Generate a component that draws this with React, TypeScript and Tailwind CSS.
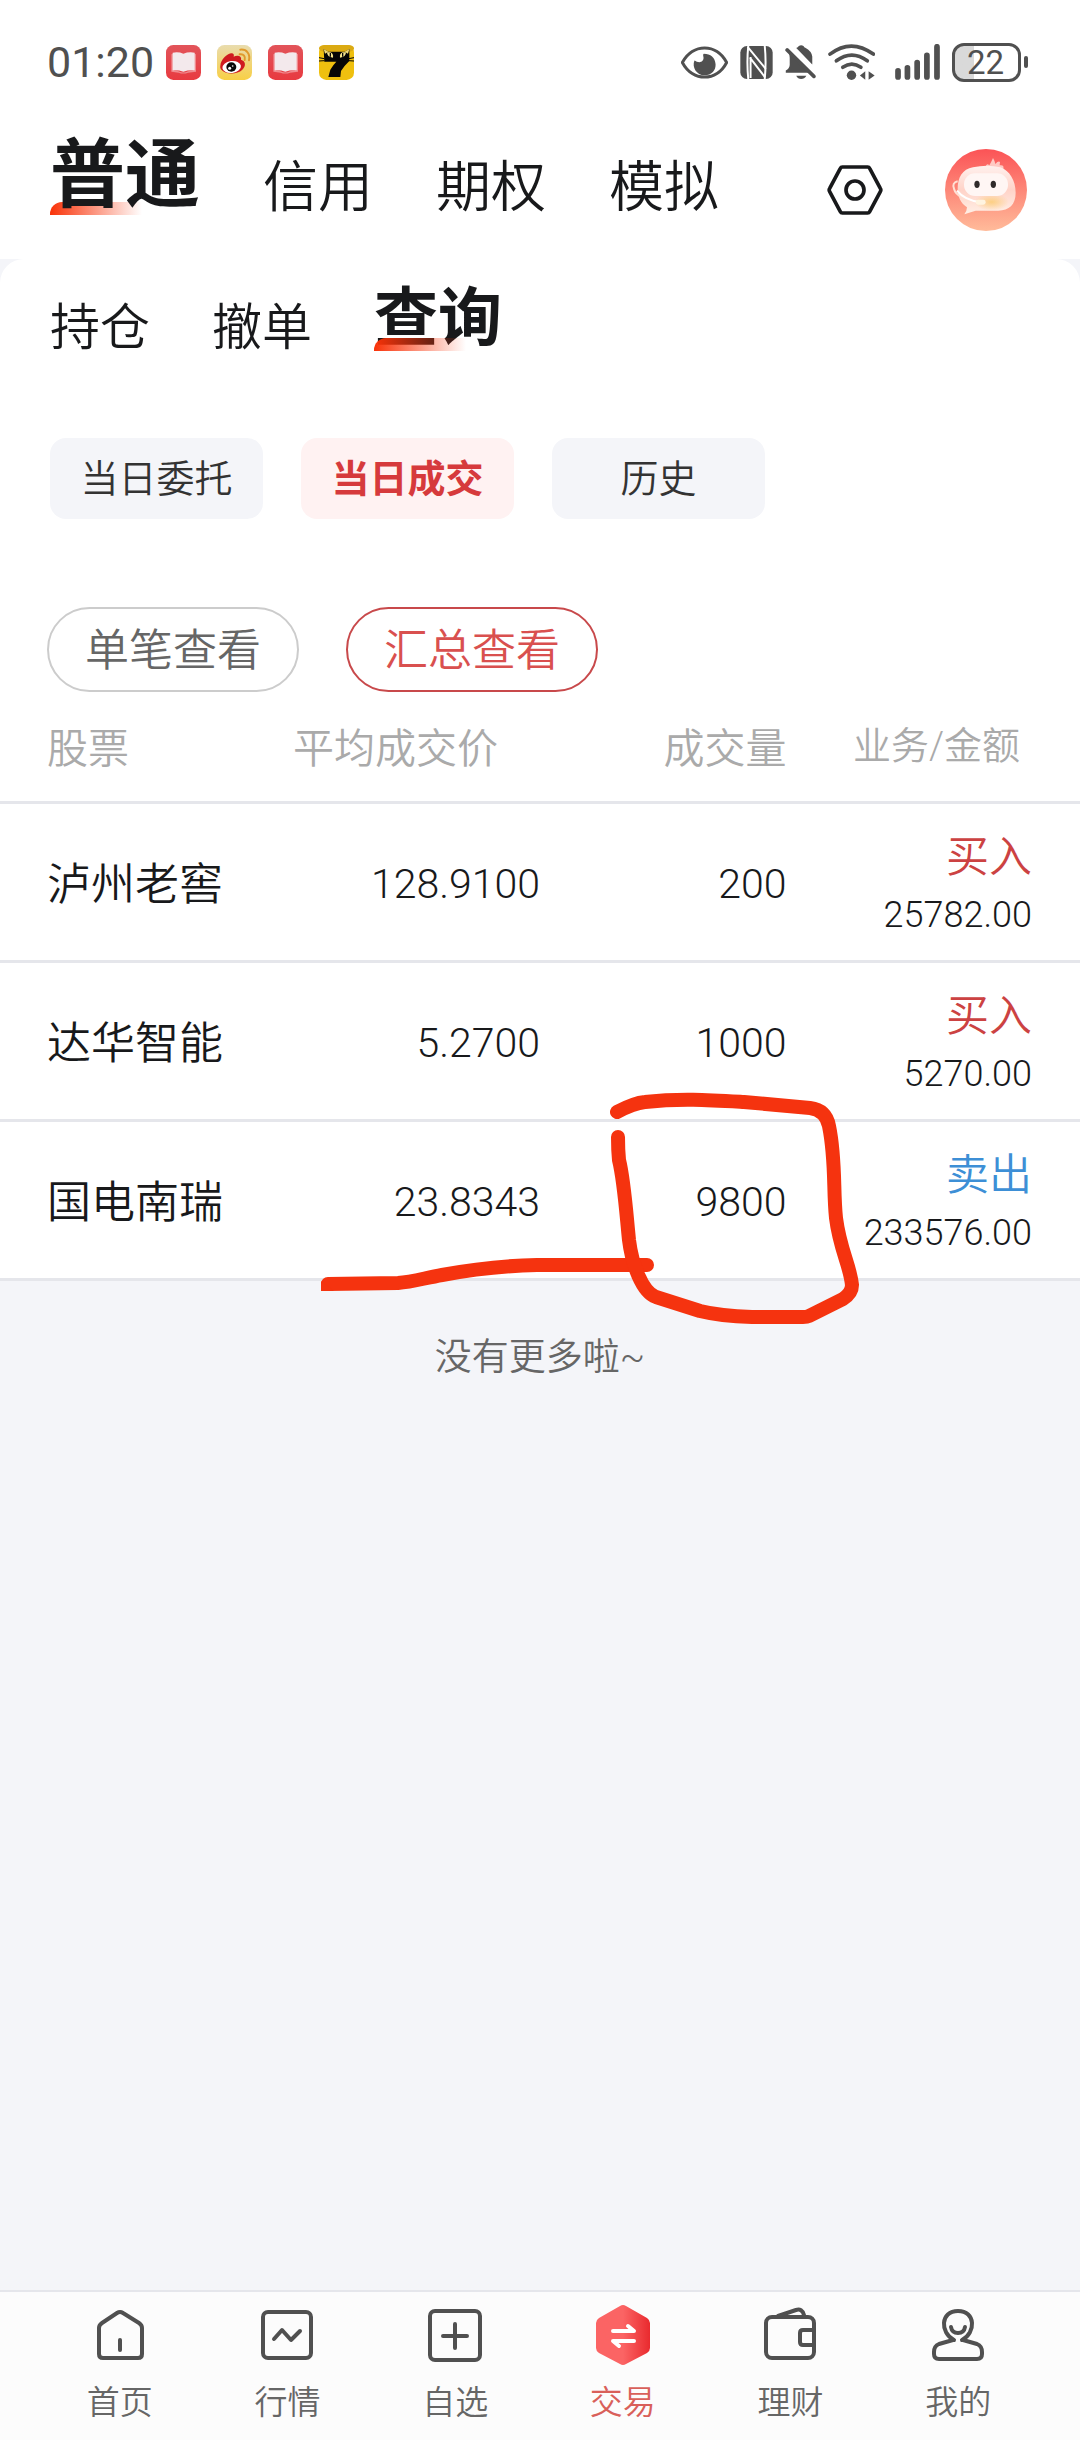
import React, { useState } from 'react';

const trades = [
    { name: '泸州老窖', price: '128.9100', volume: '200', side: '买入', amount: '25782.00' },
    { name: '达华智能', price: '5.2700', volume: '1000', side: '买入', amount: '5270.00' },
    { name: '国电南瑞', price: '23.8343', volume: '9800', side: '卖出', amount: '233576.00' },
];

const BookIcon = () => (
    <svg viewBox="0 0 105 105" className="size-[35px]">
        <defs>
            <linearGradient id="book" x1="0" y1="0" x2="0" y2="1">
                <stop offset="0" stopColor="#e2545a" />
                <stop offset="1" stopColor="#e83a40" />
            </linearGradient>
        </defs>
        <rect width="105" height="105" rx="22" fill="url(#book)" />
        <path d="M16 28L24 25V76L38 79Q52 86 66 79L82 76V25L90 28V80L66 83Q52 88 38 83L16 80Z" fill="#f08a8e" />
        <path d="M20 23Q38 20 52 26Q68 20 86 23V76Q66 75 52 80Q38 75 20 76Z" fill="#f3e9ec" />
    </svg>
);

const WeiboIcon = () => (
    <svg viewBox="0 0 105 105" className="size-[35px]">
        <defs>
            <linearGradient id="weibo" x1="0" y1="0" x2="0" y2="1">
                <stop offset="0" stopColor="#e9dcae" />
                <stop offset="1" stopColor="#f8cf45" />
            </linearGradient>
        </defs>
        <rect width="105" height="105" rx="22" fill="url(#weibo)" />
        <path d="M10 62C12 44 28 28 42 25C50 24 52 30 50 35C60 30 75 32 72 44C86 48 88 62 76 74C60 90 24 88 13 74C10 70 9 66 10 62Z" fill="#cf1b20" />
        <ellipse cx="44" cy="66" rx="28" ry="18" fill="#fff" transform="rotate(-8 44 66)" />
        <ellipse cx="43" cy="66" rx="15" ry="14" fill="#0b0b0b" />
        <circle cx="38" cy="70" r="4.5" fill="#fff" />
        <circle cx="47" cy="63" r="2.5" fill="#fff" />
        <path d="M68 28C80 26 86 34 83 45M70 14C90 12 100 28 96 46" fill="none" stroke="#e09a2c" strokeWidth="6" strokeLinecap="round" />
    </svg>
);

const CatIcon = () => (
    <svg viewBox="0 0 105 105" className="size-[35px]">
        <rect width="105" height="105" rx="22" fill="#efc00f" />
        <rect x="0" y="0" width="105" height="20" rx="16" fill="#dbaa12" />
        <path d="M14 12L28 20H77L91 12V48Q76 62 66 78L64 96H28L34 74Q42 60 52 50H16Z" fill="#060606" />
        <path d="M14 12L28 20L18 26ZM91 12L77 20L87 26Z" fill="#f6dc74" />
        <path d="M0 38L16 41M0 48L16 47M105 38L89 41M105 48L89 47" stroke="#060606" strokeWidth="3" />
        <path d="M24 22Q24 36 42 38Q44 26 34 22ZM81 22Q81 36 63 38Q61 26 71 22Z" fill="#f7e58c" />
        <path d="M34 24V35M71 24V35" stroke="#060606" strokeWidth="4" />
    </svg>
);

const EyeIcon = () => (
    <svg viewBox="20 27 140 98" className="h-[33px] w-[47px]">
        <path d="M24 76C55 18 126 18 156 76C126 134 55 134 24 76Z" fill="none" stroke="#505050" strokeWidth="9" strokeLinejoin="round" />
        <path d="M88 50C82 54 92 62 84 71C77 79 67 74 60 70C52 90 66 114 90 114C112 114 124 98 123 81C122 62 108 50 88 50Z" fill="#505050" />
    </svg>
);

const NfcIcon = () => (
    <svg viewBox="9 11 98 100" className="h-[33px] w-[33px]">
        <rect x="9" y="11" width="98" height="100" rx="20" fill="#505050" />
        <path d="M33 11Q28 60 33 111M83 11Q88 60 83 111" fill="none" stroke="#fff" strokeWidth="6" />
        <path d="M31 14L86 80M38 46L84 106M40 44V108" fill="none" stroke="#fff" strokeWidth="6" />
    </svg>
);

const BellOffIcon = () => (
    <svg viewBox="333 23 94 104" className="h-[34px] w-[31px]">
        <path d="M344 46L406 108H335V101Q346 96 347 84V62Q347 55 344 46Z" fill="#505050" />
        <path d="M367 32Q372 30 375 26Q382 22 389 26Q391 30 396 32Q414 42 416 58V83Z" fill="#505050" />
        <path d="M339 38L421 119" stroke="#505050" strokeWidth="11" strokeLinecap="round" />
        <path d="M367 117H398Q392 127 382 127Q372 127 367 117Z" fill="#505050" />
    </svg>
);

const WifiIcon = () => (
    <svg viewBox="461 23 140 107" className="h-[36px] w-[47px]">
        <g fill="none" stroke="#505050" strokeWidth="11" strokeLinecap="round">
            <path d="M467 53Q530 5 596 53" />
            <path d="M486 73Q532 39 578 73" />
            <path d="M505 92Q532 73 559 92" />
        </g>
        <circle cx="531" cy="116" r="14" fill="#505050" />
        <path d="M572 104V129L556 117ZM582 104V129L600 117Z" fill="#505050" />
    </svg>
);

const SignalIcon = () => (
    <svg viewBox="658 23 134 107" className="h-[36px] w-[45px]">
        <path d="M667 103V121M695 94V121M724 78V121M753 57V121M783 31V121" stroke="#505050" strokeWidth="17" strokeLinecap="round" />
    </svg>
);

const HexIcon = () => (
    <svg viewBox="0 0 168 150" className="h-[50px] w-[56px]" fill="none" stroke="#18191b" strokeWidth="11" strokeLinejoin="round">
        <path d="M46 6H122Q126 6 128 10L160 70Q163 75 160 80L128 140Q126 144 122 144H46Q42 144 40 140L8 80Q5 75 8 70L40 10Q42 6 46 6Z" />
        <circle cx="84" cy="75" r="27" />
    </svg>
);

const Avatar = () => (
    <svg viewBox="46 27 246 246" className="size-[82px]">
        <defs>
            <linearGradient id="sky" x1="0" y1="0" x2="0" y2="1">
                <stop offset="0" stopColor="#fb5356" />
                <stop offset="1" stopColor="#ffbb9a" />
            </linearGradient>
            <linearGradient id="body" x1="0" y1="0" x2="0" y2="1">
                <stop offset="0" stopColor="#fff1ee" />
                <stop offset="0.5" stopColor="#ffd3c8" />
                <stop offset="1" stopColor="#fff0e6" />
            </linearGradient>
            <radialGradient id="glow" cx="0.5" cy="0.5" r="0.5">
                <stop offset="0" stopColor="#fccf83" />
                <stop offset="1" stopColor="#fccf83" stopOpacity="0" />
            </radialGradient>
        </defs>
        <circle cx="169" cy="150" r="123" fill="url(#sky)" />
        <path d="M168 82Q170 68 179 76Q184 68 190 54Q196 64 197 72Q206 62 211 66L210 76Q224 74 221 86L214 96Z" fill="#ffc9c3" />
        <path d="M130 82Q172 72 212 82C240 92 258 122 258 158C258 194 238 211 206 212H138L104 223Q112 212 112 202C92 190 84 168 84 148C84 112 98 88 130 82Z" fill="url(#body)" />
        <ellipse cx="186" cy="186" rx="52" ry="26" fill="url(#glow)" />
        <rect x="103" y="100" width="132" height="68" rx="33" fill="#fff6f4" />
        <path d="M84 124Q66 128 73 146Q80 176 152 187" fill="none" stroke="#ffe0d4" strokeWidth="6" />
        <path d="M82 152Q104 180 152 187" fill="none" stroke="#fff" strokeWidth="6" />
        <rect x="138" y="179" width="30" height="15" rx="7" fill="#fff4e0" />
        <ellipse cx="142" cy="133" rx="8" ry="11" fill="#2f2a2a" />
        <ellipse cx="191" cy="133" rx="8" ry="11" fill="#2f2a2a" />
    </svg>
);

const HomeIcon = () => (
    <>
        <path d="M9 22Q9 19 12 17L27 7Q30 5 33 7L49 17Q52 19 52 22V48Q52 52 48 52H13Q9 52 9 48Z" />
        <path d="M30 34V44" />
    </>
);

const MarketIcon = () => (
    <>
        <rect x="6" y="6" width="48" height="46" rx="5" />
        <path d="M17 33L25 24L34 34L43 25" />
    </>
);

const AddIcon = () => (
    <>
        <rect x="5" y="5" width="50" height="49" rx="5" />
        <path d="M18 30H42M30 18V42" />
    </>
);

const TradeIcon = () => (
    <>
        <defs>
            <linearGradient id="hex" x1="0" y1="0" x2="1" y2="0">
                <stop offset="0.5" stopColor="#fb6464" />
                <stop offset="1" stopColor="#e92a2e" />
            </linearGradient>
        </defs>
        <path d="M27 0Q30 -2 33 0L54 12Q57 14 57 17V42Q57 45 54 47L33 58Q30 60 27 58L6 47Q3 45 3 42V17Q3 14 6 12Z" fill="url(#hex)" stroke="none" />
        <path d="M20 25H41L35 20M41 35H20L26 40" stroke="#fff" />
    </>
);

const WalletIcon = () => (
    <>
        <rect x="6" y="11" width="48" height="41" rx="6" />
        <path d="M18 10L36 4Q42 2 44 9M54 24H43Q40 24 40 27V36Q40 39 43 39H54" />
    </>
);

const MeIcon = () => (
    <>
        <path d="M26 34C12 27 12 5 30 5C48 5 48 27 34 34" />
        <path d="M25 34L11 38Q6 40 6 46V48Q6 53 11 53H49Q54 53 54 48V46Q54 40 49 38L35 34" />
        <path d="M23 21Q24 27 30 27Q36 27 37 21" />
    </>
);

const menus = [
    { label: '首页', Icon: HomeIcon },
    { label: '行情', Icon: MarketIcon },
    { label: '自选', Icon: AddIcon },
    { label: '交易', Icon: TradeIcon },
    { label: '理财', Icon: WalletIcon },
    { label: '我的', Icon: MeIcon },
];

const StatusBar = () => (
    <div className="flex h-[124px] items-center justify-between pr-[52px] pl-[47px] font-normal">
        <div className="flex items-center gap-4">
            <span className="-mr-1 text-[43px] leading-none text-[#505050]">01:20</span>
            <BookIcon />
            <WeiboIcon />
            <BookIcon />
            <CatIcon />
        </div>
        <div className="flex items-center gap-3">
            <EyeIcon />
            <NfcIcon />
            <BellOffIcon />
            <WifiIcon />
            <div className="pl-2">
                <SignalIcon />
            </div>
            <div className="flex items-center gap-[3px]">
                <div className="flex h-[39px] w-[69px] items-center justify-center rounded-xl border-[3px] border-[#505050] bg-linear-to-r from-[#d9d9d9] from-30% to-white to-30% pr-0.5 text-[33px] leading-none text-[#505050]">
                    22
                </div>
                <div className="h-3 w-1 rounded-full bg-[#505050]" />
            </div>
        </div>
    </div>
);

const App = () => {
    const [account, setAccount] = useState('普通');
    const [tab, setTab] = useState('查询');
    const [range, setRange] = useState('当日成交');
    const [view, setView] = useState('汇总查看');
    const [menu, setMenu] = useState('交易');

    return (
        <div className="flex min-h-screen flex-col bg-[#f4f5f9] font-['Roboto','Noto_Sans_CJK_SC',sans-serif] font-[350] text-[#18191b]">
            <header className="bg-white">
                <StatusBar />
                <div className="flex h-[135px] items-start justify-between pt-3.5 pr-[53px] pl-[50px]">
                    <nav className="flex items-end gap-[63px]">
                        {['普通', '信用', '期权', '模拟'].map((item) => (
                            <button
                                key={item}
                                type="button"
                                onClick={() => setAccount(item)}
                                className={
                                    item === account
                                        ? 'relative isolate pb-0.5 text-[75px] leading-none font-bold'
                                        : 'text-[55px] leading-none'
                                }
                            >
                                {item}
                                {item === account && (
                                    <span className="absolute bottom-0 left-0 -z-10 h-[13px] w-[92px] rounded-tl-xl bg-linear-to-r from-[#f93208] to-transparent" />
                                )}
                            </button>
                        ))}
                    </nav>
                    <div className="flex items-center gap-[62px] pt-[11px]">
                        <button type="button" aria-label="设置">
                            <HexIcon />
                        </button>
                        <button type="button" aria-label="客服">
                            <Avatar />
                        </button>
                    </div>
                </div>
            </header>

            <main className="flex flex-1 flex-col">
                <section className="rounded-t-3xl bg-white pt-7">
                    <nav className="flex items-end gap-[62px] px-[50px]">
                        {['持仓', '撤单', '查询'].map((item) => (
                            <button
                                key={item}
                                type="button"
                                onClick={() => setTab(item)}
                                className={
                                    item === tab
                                        ? 'relative pb-0.5 text-[64px] leading-none font-bold'
                                        : 'text-[50px] leading-none'
                                }
                            >
                                {item}
                                {item === tab && (
                                    <span className="absolute bottom-0.5 left-0 h-[13px] w-[92px] rounded-tl-xl bg-linear-to-r from-[#f93208] to-transparent" />
                                )}
                            </button>
                        ))}
                    </nav>

                    <div className="mt-[85px] flex gap-[38px] px-[50px]">
                        {['当日委托', '当日成交', '历史'].map((item) => (
                            <button
                                key={item}
                                type="button"
                                onClick={() => setRange(item)}
                                className={
                                    item === range
                                        ? 'h-[81px] w-[213px] rounded-2xl bg-[#fff2f2] text-[38px] leading-none font-bold text-[#d63a3c]'
                                        : 'h-[81px] w-[213px] rounded-2xl bg-[#f4f5f9] text-[38px] leading-none text-[#333333]'
                                }
                            >
                                {item}
                            </button>
                        ))}
                    </div>

                    <div className="mt-[88px] flex gap-[47px] px-[47px]">
                        {['单笔查看', '汇总查看'].map((item) => (
                            <button
                                key={item}
                                type="button"
                                onClick={() => setView(item)}
                                className={
                                    item === view
                                        ? 'h-[85px] w-[252px] rounded-full border-2 border-[#c8494b] pt-0.5 text-[44px] leading-none text-[#d9504f]'
                                        : 'h-[85px] w-[252px] rounded-full border-2 border-[#cccccc] pt-0.5 text-[44px] leading-none text-[#666666]'
                                }
                            >
                                {item}
                            </button>
                        ))}
                    </div>

                    <div className="relative">
                        <table className="w-full table-fixed">
                            <thead>
                                <tr className="h-[110px] border-b-[3px] border-[#e5e6eb] text-[41px] leading-none text-[#aaaaaa]">
                                    <th className="w-[25%] pt-1.5 pl-[47px] text-left font-[350]">股票</th>
                                    <th className="w-[25%] pt-1.5 pr-[42px] text-right font-[350]">平均成交价</th>
                                    <th className="w-[23%] pt-1.5 pr-0.5 text-right font-[350]">成交量</th>
                                    <th className="pr-[60px] text-right text-[38px] font-[350]">业务/金额</th>
                                </tr>
                            </thead>
                            <tbody>
                                {trades.map((t) => (
                                    <tr key={t.name} className="h-[159px] border-b-[3px] border-[#e5e6eb] text-[41px] leading-none">
                                        <td className="pt-1.5 pl-[47px] text-[44px]">{t.name}</td>
                                        <td className="pt-1.5 text-right">{t.price}</td>
                                        <td className="pt-1.5 pr-0.5 text-right">{t.volume}</td>
                                        <td className="pt-1.5 pr-12 text-right">
                                            <div className={t.side === '买入' ? 'text-[43px] text-[#cc4242]' : 'text-[43px] text-[#3d8fd6]'}>
                                                {t.side}
                                            </div>
                                            <div className="mt-[18px] text-[36px]">{t.amount}</div>
                                        </td>
                                    </tr>
                                ))}
                            </tbody>
                        </table>

                        {/* hand-drawn marks over the last trade */}
                        <svg
                            viewBox="310 1080 560 260"
                            className="pointer-events-none absolute top-[388px] left-[310px] h-[260px] w-[560px]"
                            fill="none"
                            stroke="#f5330f"
                            strokeWidth="14"
                            strokeLinecap="round"
                            strokeLinejoin="round"
                        >
                            <path d="M328 1284L398 1283C412 1282 425 1278 442 1275Q490 1266 537 1265H647" />
                            <path d="M321 1281V1291H334" stroke="none" fill="#f5330f" />
                            <path d="M617 1112Q634 1103 645 1102C680 1098 710 1100 744 1102L810 1108Q826 1110 829 1126C836 1160 833 1190 836 1218C840 1250 850 1265 852 1285Q852 1293 843 1299L809 1316Q807 1317 803 1317H752Q720 1316 700 1311L656 1297C642 1292 632 1264 629 1240C626 1210 624 1180 619 1160Q618 1150 618 1137" />
                        </svg>
                    </div>
                </section>

                <p className="mt-[58px] text-center text-[37px] leading-none text-[#666666]">没有更多啦~</p>
            </main>

            <footer className="border-t-2 border-[#e5e6eb] bg-[#fcfcfc] pr-[38px] pl-9">
                <nav className="grid grid-cols-6">
                    {menus.map(({ label, Icon }) => (
                        <button
                            key={label}
                            type="button"
                            onClick={() => setMenu(label)}
                            className={
                                label === menu
                                    ? 'flex h-[148px] flex-col items-center pt-[14px] text-[33px] leading-none text-[#d9605a]'
                                    : 'flex h-[148px] flex-col items-center pt-[14px] text-[33px] leading-none text-[#666666]'
                            }
                        >
                            <svg
                                viewBox="0 0 60 60"
                                className="mb-5 size-[60px] overflow-visible"
                                fill="none"
                                stroke="#505050"
                                strokeWidth="4"
                                strokeLinecap="round"
                                strokeLinejoin="round"
                            >
                                <Icon />
                            </svg>
                            {label}
                        </button>
                    ))}
                </nav>
            </footer>
        </div>
    );
};

export default App;
